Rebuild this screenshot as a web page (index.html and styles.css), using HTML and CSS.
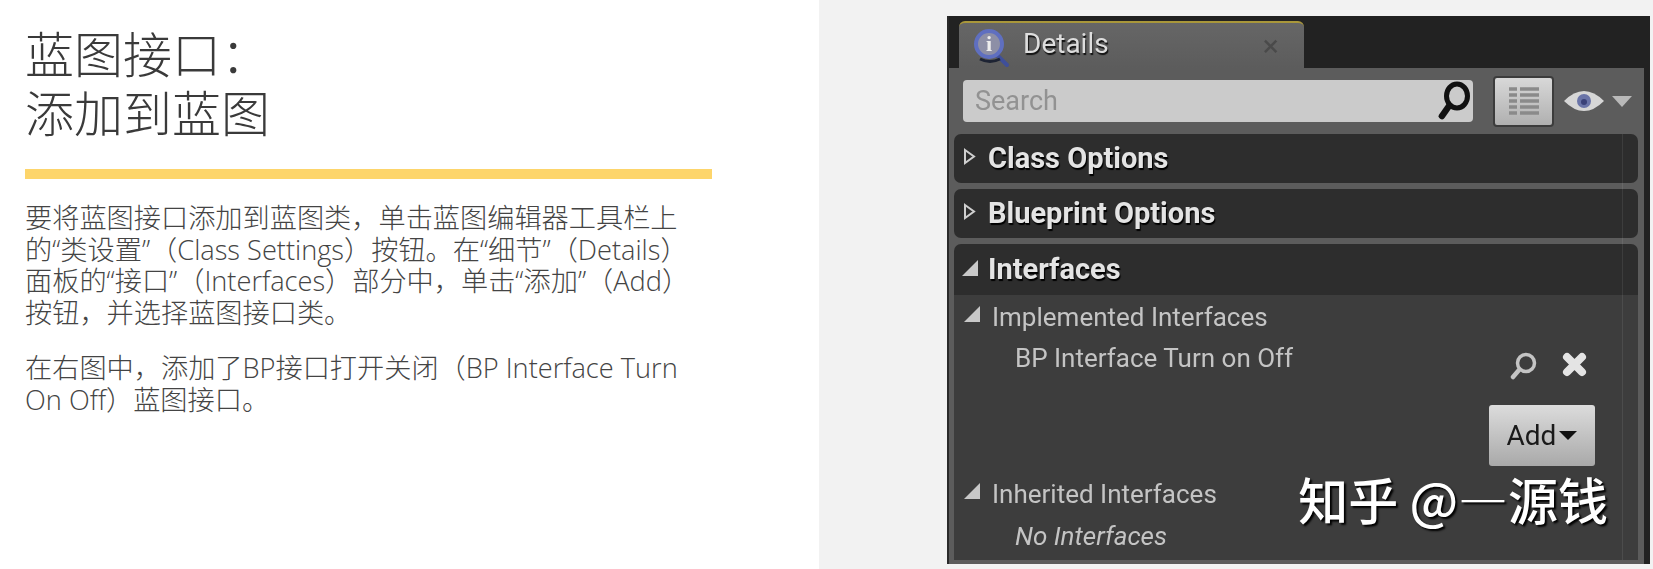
FILE: index.html
```html
<!DOCTYPE html>
<html lang="zh-CN">
<head>
    <meta charset="UTF-8">
    <meta name="viewport" content="width=device-width, initial-scale=1.0">
    <title>蓝图接口：添加到蓝图</title>
    <link rel="stylesheet" href="styles.css">
</head>
<body>
    <div class="page">
        <div class="slide">
            <h1 class="slide-title">蓝图接口：<br>添加到蓝图</h1>
            <div class="slide-rule"></div>
            <p class="slide-text">要将蓝图接口添加到蓝图类，单击蓝图编辑器工具栏上<br>的“类设置”（Class Settings）按钮。在“细节”（Details）<br>面板的“接口”（Interfaces）部分中，单击“添加”（Add）<br>按钮，并选择蓝图接口类。</p>
            <p class="slide-text">在右图中，添加了BP接口打开关闭（BP Interface Turn<br>On Off）蓝图接口。</p>
        </div>

        <div class="side">
            <div class="details">
                <div class="tabbar">
                    <div class="tab">
                        <svg class="tab-icon" viewBox="0 0 38 40">
                            <path d="M25 27 L35 37" stroke="#3f4f9a" stroke-width="4" stroke-linecap="round"/>
                            <path d="M8 31 Q18 36 28 31" stroke="#1d2333" stroke-width="3" fill="none"/>
                            <circle cx="17" cy="16" r="13" fill="#8d8fa6" stroke="#5f6fc0" stroke-width="4"/>
                            <text x="17" y="23" class="tab-icon-i">i</text>
                        </svg>
                        <span class="tab-label">Details</span>
                        <span class="tab-close">×</span>
                    </div>
                </div>

                <div class="toolbar">
                    <div class="search">
                        <span class="search-text">Search</span>
                        <svg class="search-icon" viewBox="0 0 32 40">
                            <ellipse cx="19" cy="15" rx="10.5" ry="12" fill="none" stroke="#111" stroke-width="5"/>
                            <path d="M11 25 L4 35" stroke="#111" stroke-width="6.5" stroke-linecap="round"/>
                        </svg>
                    </div>
                    <div class="view-btn">
                        <svg class="view-icon" viewBox="0 0 32 32">
                            <path d="M1 4 H9 M12 4 H31 M1 10 H9 M12 10 H31 M1 16 H9 M12 16 H31 M1 22 H9 M12 22 H31 M1 28 H9 M12 28 H31" stroke="#8a8a8a" stroke-width="3.4"/>
                        </svg>
                    </div>
                    <svg class="eye-icon" viewBox="0 0 40 24">
                        <path d="M0 12 Q20 -8 40 12 Q20 32 0 12 Z" fill="#d6d6d6"/>
                        <circle cx="20" cy="12" r="7" fill="#6a74a8"/>
                        <circle cx="20" cy="13" r="3" fill="#3a4178"/>
                    </svg>
                    <span class="eye-arrow"></span>
                </div>

                <div class="section">
                    <div class="section-head">
                        <svg class="arrow-open" viewBox="0 0 13 17"><path d="M2 2 L11 8.5 L2 15 Z" fill="none" stroke="#cfcfcf" stroke-width="2"/></svg>
                        Class Options
                    </div>
                </div>
                <div class="section">
                    <div class="section-head">
                        <svg class="arrow-open" viewBox="0 0 13 17"><path d="M2 2 L11 8.5 L2 15 Z" fill="none" stroke="#cfcfcf" stroke-width="2"/></svg>
                        Blueprint Options
                    </div>
                </div>
                <div class="section section-expanded">
                    <div class="section-head section-head-tall"><span class="arrow-down"></span>Interfaces</div>
                    <div class="section-body">
                        <div class="sub-head"><span class="arrow-down arrow-small"></span>Implemented Interfaces</div>
                        <div class="item-row">
                            <span class="item-name">BP Interface Turn on Off</span>
                            <div class="item-tools">
                                <svg class="item-search" viewBox="0 0 27 28">
                                    <circle cx="16" cy="11" r="8.5" fill="none" stroke="#c4c4c4" stroke-width="3.5"/>
                                    <path d="M9 18 L3 25" stroke="#c4c4c4" stroke-width="4.5" stroke-linecap="round"/>
                                </svg>
                                <svg class="item-remove" viewBox="0 0 25 25">
                                    <path d="M5 5 L20 20 M20 5 L5 20" stroke="#e4e4e4" stroke-width="8" stroke-linecap="round"/>
                                </svg>
                            </div>
                        </div>
                        <div class="add-row">
                            <div class="add-btn">Add<span class="add-arrow"></span></div>
                        </div>
                        <div class="sub-head sub-head-last"><span class="arrow-down arrow-small"></span>Inherited Interfaces</div>
                        <div class="item-empty">No Interfaces</div>
                    </div>
                </div>

                <div class="watermark">知乎 @—源钱</div>
            </div>
        </div>
    </div>
</body>
</html>
```
FILE: styles.css
```css
body {
    margin: 0;
    padding: 0;
    background-color: #fff;
    overflow: hidden;
}

.page {
    display: flex;
    height: 569px;
}

/* left side: slide text */
.slide {
    width: 819px;
    box-sizing: border-box;
    padding: 25px 0 0 25px;
    font-family: "Open Sans", "Noto Sans CJK SC", sans-serif;
    text-spacing-trim: space-all;
}

.slide-title {
    margin: 0;
    font-size: 49px;
    line-height: 59px;
    font-weight: 300;
    color: #3a3a3a;
}

.slide-rule {
    width: 687px;
    height: 10px;
    margin-top: 26px;
    background-color: #fdd56b;
}

.slide-text {
    margin: 24px 0 0;
    font-size: 27.2px;
    line-height: 31.5px;
    font-weight: 300;
    color: #444;
    white-space: nowrap;
}

.slide-rule + .slide-text {
    margin-top: 23px;
}

/* right side: details panel */
.side {
    flex: 1;
    box-sizing: border-box;
    padding: 16px 3px 5px 128px;
    background-color: #f2f2f2;
}

.details {
    position: relative;
    height: 100%;
    display: flex;
    flex-direction: column;
    box-sizing: border-box;
    padding-bottom: 4px;
    border-left: 2px solid #2a2a2a;
    border-right: 6px solid #222;
    background-color: #5c5c5c;
    font-family: Roboto, sans-serif;
    filter: blur(0.5px);
}

/* faint vertical line that runs through the rows */
.details::after {
    content: "";
    position: absolute;
    top: 118px;
    bottom: 4px;
    right: 21px;
    width: 1px;
    background-color: rgba(255, 255, 255, 0.08);
}

.tabbar {
    height: 52px;
    flex: none;
    box-sizing: border-box;
    padding: 5px 0 0 10px;
    background-color: #222;
}

.tab {
    width: 345px;
    height: 47px;
    display: flex;
    align-items: center;
    box-sizing: border-box;
    padding: 0 0 0 13px;
    border-top: 2px solid #a9973a;
    border-radius: 6px 6px 0 0;
    background: linear-gradient(#666, #5c5c5c);
}

.tab-icon {
    width: 38px;
    height: 40px;
    margin-top: 4px;
}

.tab-icon-i {
    font-family: "Liberation Serif", serif;
    font-size: 22px;
    font-weight: 700;
    fill: #eee;
    text-anchor: middle;
}

.tab-label {
    margin-left: 13px;
    margin-top: -4px;
    font-size: 28px;
    color: #ddd;
    text-shadow: 1px 2px 1px #111;
}

.tab-close {
    margin-left: 154px;
    font-size: 30px;
    color: #4a4a4a;
}

.toolbar {
    height: 66px;
    flex: none;
    display: flex;
    align-items: center;
    box-sizing: border-box;
    padding-left: 14px;
}

.search {
    width: 510px;
    height: 42px;
    display: flex;
    align-items: center;
    justify-content: space-between;
    box-sizing: border-box;
    padding: 0 3px 0 12px;
    border-radius: 4px;
    background-color: #cbcbcb;
}

.search-text {
    font-size: 27px;
    color: #929292;
}

.search-icon {
    width: 32px;
    height: 40px;
}

.view-btn {
    width: 61px;
    height: 51px;
    flex: none;
    display: flex;
    align-items: center;
    justify-content: center;
    box-sizing: border-box;
    margin-left: 20px;
    border: 2px solid #3c3c3c;
    border-radius: 4px;
    background: linear-gradient(#d8d8d8, #b0b0b0);
}

.view-icon {
    width: 32px;
    height: 34px;
}

.eye-icon {
    width: 40px;
    height: 26px;
    margin-left: 10px;
}

.eye-arrow {
    margin-left: 8px;
    border-left: 10px solid transparent;
    border-right: 10px solid transparent;
    border-top: 11px solid #b9b9b9;
}

.section {
    flex: none;
    margin: 0 6px 6px 5px;
    border-radius: 7px;
    background-color: #2d2d2d;
}

.section-head {
    height: 49px;
    display: flex;
    align-items: center;
    box-sizing: border-box;
    padding: 0 0 2px 34px;
    position: relative;
    font-size: 29px;
    font-weight: 700;
    color: #e4e4e4;
    text-shadow: 1px 2px 1px #000;
}

.section-head-tall {
    height: 51px;
    flex: none;
}

.section-expanded {
    flex: 1;
    display: flex;
    flex-direction: column;
    margin-bottom: 0;
    border-radius: 7px 7px 0 0;
}

.arrow-open {
    position: absolute;
    left: 9px;
    top: 14px;
    width: 13px;
    height: 17px;
}

.arrow-down {
    position: absolute;
    left: 8px;
    top: 16px;
    width: 0;
    height: 0;
    border-bottom: 16px solid #c8c8c8;
    border-left: 16px solid transparent;
}

.arrow-small {
    left: 10px;
    top: 7px;
}

.section-body {
    flex: 1;
    padding-top: 4px;
    background-color: #3d3d3d;
    font-size: 26px;
    color: #c4c4c4;
}

.sub-head {
    position: relative;
    height: 36px;
    line-height: 36px;
    padding-left: 38px;
}

.item-row {
    display: flex;
    justify-content: space-between;
    height: 46px;
    padding: 5px 51px 0 61px;
    line-height: 36px;
}

.item-tools {
    display: flex;
    align-items: flex-start;
    gap: 25px;
    padding-top: 12px;
}

.item-search {
    width: 27px;
    height: 28px;
}

.item-remove {
    width: 25px;
    height: 25px;
}

.add-row {
    display: flex;
    justify-content: flex-end;
    padding: 19px 43px 0 0;
}

.add-btn {
    width: 106px;
    height: 61px;
    display: flex;
    align-items: center;
    justify-content: center;
    gap: 3px;
    border-radius: 3px;
    background: linear-gradient(#dcdcdc, #a9a9a9);
    font-size: 28px;
    color: #1a1a1a;
}

.add-arrow {
    border-left: 9px solid transparent;
    border-right: 9px solid transparent;
    border-top: 9px solid #111;
}

.sub-head-last {
    margin-top: 10px;
}

.item-empty {
    height: 36px;
    margin-top: 6px;
    padding-left: 61px;
    line-height: 36px;
    font-style: italic;
}

.watermark {
    position: absolute;
    right: 36px;
    bottom: 41px;
    font-family: "Noto Sans CJK SC", sans-serif;
    font-size: 50px;
    line-height: 50px;
    font-weight: 500;
    color: #fff;
    text-shadow: 2px 2px 2px #000;
    white-space: nowrap;
}
```
